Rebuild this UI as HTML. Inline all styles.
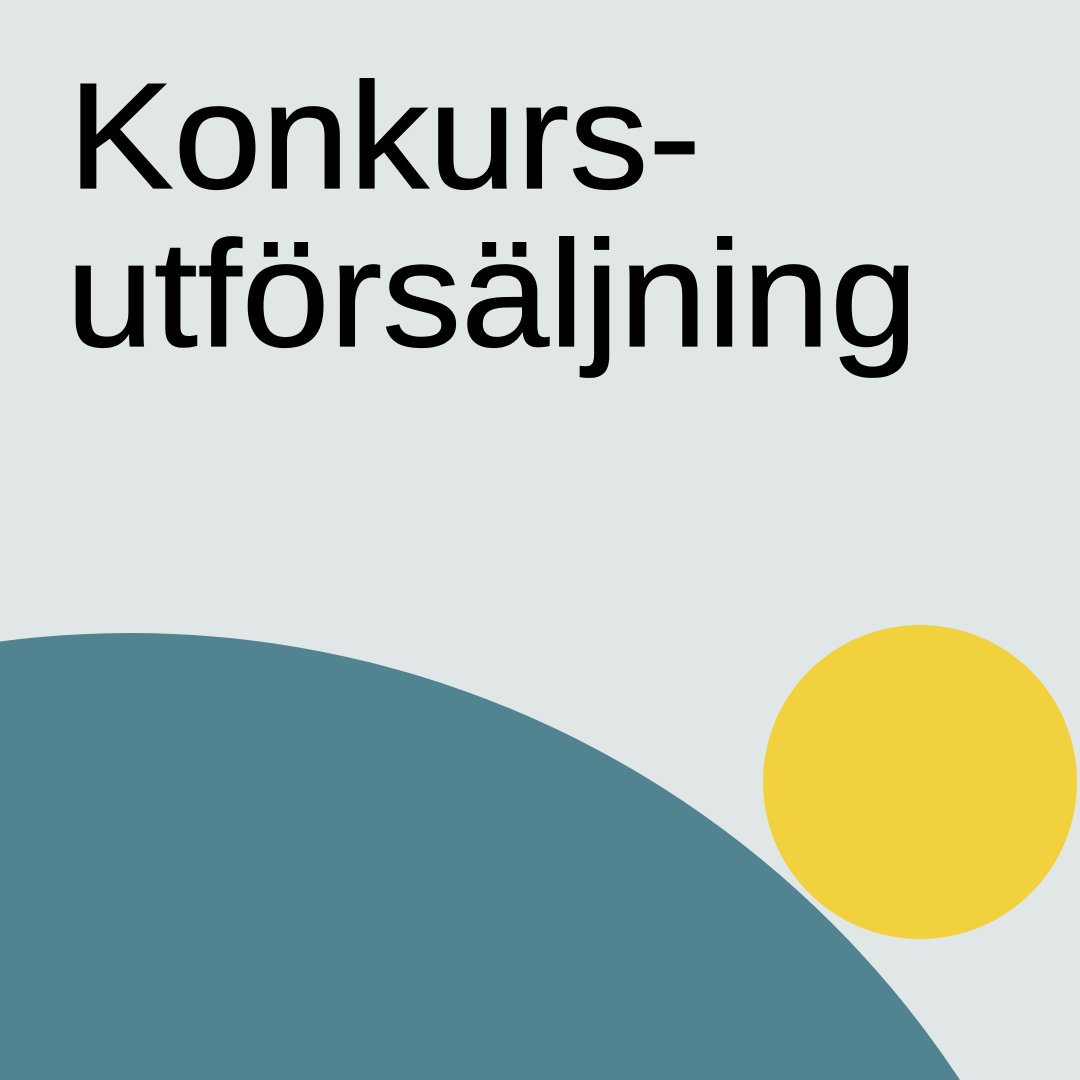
<!DOCTYPE html>
<html><head><meta charset="utf-8"><style>
html,body{margin:0;padding:0;width:1080px;height:1080px;overflow:hidden;}
body{background:#e1e7e7;}
svg{display:block;}
</style></head><body>
<svg width="1080" height="1080" viewBox="0 0 1080 1080" xmlns="http://www.w3.org/2000/svg">
<rect width="1080" height="1080" fill="#e1e7e7"/>
<circle cx="130" cy="1627" r="994" fill="#518490"/>
<circle cx="920" cy="782" r="157" fill="#f2d13e"/>
<g font-family="'Liberation Sans', Arial, sans-serif" font-size="151" fill="#000" stroke="#000" stroke-width="1.2">
<text x="68" y="188" textLength="633" lengthAdjust="spacingAndGlyphs">Konkurs-</text>
<text x="66" y="346" textLength="852" lengthAdjust="spacingAndGlyphs">utförsäljning</text>
</g>
</svg>
</body></html>
